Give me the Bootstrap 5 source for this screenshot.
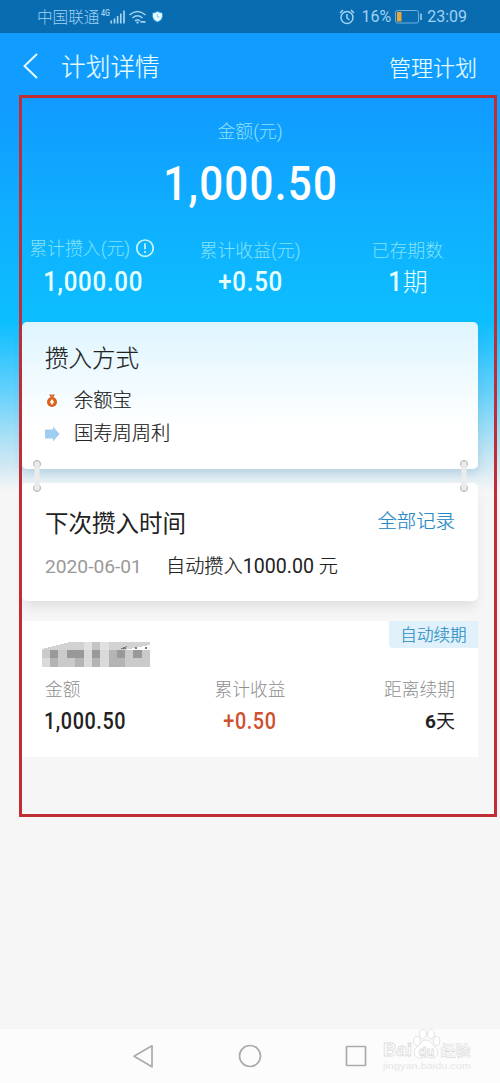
<!DOCTYPE html>
<html lang="zh-CN">
<head>
<meta charset="utf-8">
<meta name="viewport" content="width=device-width, initial-scale=1">
<title>计划详情</title>
<link href="https://cdn.jsdelivr.net/npm/bootstrap@5.3.0/dist/css/bootstrap.min.css" rel="stylesheet">
<style>
body{font-family:Roboto,"Noto Sans CJK SC",sans-serif;background:#f6f6f6;color:#222;line-height:1;height:1083px;overflow:hidden}
.screen{height:1083px;background:linear-gradient(#109dff 0,#109dff 115px,#0fafff 220px,#0cbfff 322px,#2fc5fe 350px,#69d2fb 395px,#a2def6 432px,#d3e9f3 467px,#e6f0f5 480px,#f6f6f6 492px)}
.statusbar{height:33px;background:#096bb0;color:#a0d3f3;font-size:16px;padding:1px 33px 0 37px}
.carrier{font-size:15.6px;font-weight:300;padding-top:3px}
.topbar{height:66px;color:#e8fcff;font-weight:300;padding:0 23px 0 22px;-webkit-text-stroke:.2px}
.topbar h1{font-size:24.7px;font-weight:300;margin:0 0 0 21px;padding-top:4px}
.t22{font-size:22px;padding-top:5px}
.total-label{height:64px;font-size:17.9px;color:#8fe2f8;font-weight:300;padding-top:2px}
.total{height:40px;font-size:49px;font-weight:500;color:#fff}
.din{display:inline-block;transform:scaleX(.86);letter-spacing:.03em;margin-right:-.03em}
.stats{height:119px;padding:33px 14px 0}
.stat-label{height:26px;font-size:17.9px;color:#84e2f8;font-weight:300;padding-top:3px}
.stat-label.lead-item{padding-top:0;margin-left:-2px}
.stat-value{height:34px;margin-top:3px;font-size:28px;font-weight:500;color:#e8ffff}
.sheet{margin:0 22px;position:relative}
.way{height:147px;border-radius:5px;background:linear-gradient(#def5ff,#fff 105px);padding:20px 23px 0;box-shadow:0 5px 10px rgba(60,120,160,.2)}
.ttl{font-size:23.5px;height:34px;margin:0;font-weight:300}
.way .ttl,.way-row{-webkit-text-stroke:.2px}
.way-row{height:33px;font-size:19.3px;font-weight:300}
.way-row svg{margin-right:14px}
.next{height:118px;margin-top:14px;background:#fff;border-radius:5px;padding:23px 23px 0;box-shadow:0 8px 12px -2px rgba(0,0,0,.09)}
.next .ttl{font-weight:400;padding-top:2px}
.next a{font-size:19.4px;color:#2989c6;text-decoration:none;font-weight:300;margin-top:-2px;-webkit-text-stroke:.2px}
.next-row{font-size:19.2px;height:34px;margin-top:10px;font-weight:300}
.next-row span{-webkit-text-stroke:.2px}
.next-row span span{font-size:19.6px;-webkit-text-stroke:0}
.next-row time{color:#999;width:121px}
.ring{position:absolute;bottom:-23.5px;z-index:2}
.term{height:136px;margin-top:20px;background:#fff;padding:0 23px}
.tag{position:absolute;right:0;top:0;width:89px;height:27px;font-size:16.6px;color:#2a90c4;background:#e1f1fc;border-radius:0 0 0 4px;font-weight:300;padding-top:3px;-webkit-text-stroke:.2px}
.mosaic{display:block;margin-left:-3px;padding-top:21px;height:55px}
.term-label{font-size:17.8px;color:#8e8e8e;height:26px;font-weight:300;padding-top:2px}
.term-value{font-size:23px;height:38px;font-weight:500}
.days{font-size:19px}
.gain{color:#ce5030}
.din.origin-l{transform-origin:left;margin-left:-1px}
.marker{position:absolute;left:19px;top:95px;width:478px;height:722px;border:3px solid #bf2e37;z-index:5}
.sysnav{height:54px;background:#fcfcfc}
.wm{position:absolute;left:382px;top:1026px}
</style>
</head>
<body>
<div class="screen d-flex flex-column position-relative">
  <div class="statusbar d-flex align-items-center">
    <span class="carrier">中国联通</span>
    <svg width="66" height="24" viewBox="99 5 66 24" fill="none" stroke="#a0d3f3">
      <text x="101" y="16" font-size="9" font-weight="500" textLength="9" lengthAdjust="spacingAndGlyphs" fill="#a0d3f3" stroke="none">4G</text>
      <path d="M111.200 23.500v-3M114.500 23.500v-5M117.600 23.500v-7.500M120.800 23.500v-10M124 23.500v-13" stroke-width="1.700"/>
      <path d="M129.500 15q8-7 16 0M132.500 18q5-4.500 10 0M135 21q2.500-2.500 5 0" stroke-width="1.600"/>
      <path d="M136.500 22.500h2M140.500 21.800h5" stroke-width="1.800"/>
      <path d="M157.500 11.500l5 1.800q.8 7-5 8.700q-5.800-1.700-5-8.700z" fill="#e9fbff" stroke="#27a1e6"/>
      <path d="M157.500 14v3h2" stroke="#77bde8" stroke-width=".8"/>
    </svg>
    <svg class="ms-auto" width="18" height="20" viewBox="0 0 18 20" fill="none" stroke="#a0d3f3" stroke-width="1.500"><circle cx="8" cy="10.500" r="6"/><path d="M8 7v4l2.500 2M1 6l3-3M15 6l-3-3"/></svg>
    <span class="ms-1">16%</span>
    <svg width="36" height="16" viewBox="0 0 36 16"><rect x="4.500" y="1.500" width="23" height="12.500" rx="2" fill="none" stroke="#74b2db"/><path d="M6 3h4.500v9.500H6z" fill="#eba63c"/><path d="M30 4.500v6.500" stroke="#a0d3f3" stroke-width="1.500"/></svg>
    <span>23:09</span>
  </div>
  <div class="topbar d-flex align-items-center">
    <svg width="18" height="28" viewBox="0 0 18 28" fill="none" stroke="#e8fcff" stroke-width="2"><path d="M15 2L2.500 14l12.500 12"/></svg>
    <h1>计划详情</h1><span class="ms-auto t22">管理计划</span>
  </div>
  <div class="total-label d-flex align-items-center justify-content-center">金额(元)</div>
  <div class="total d-flex align-items-center justify-content-center"><span class="din">1,000.50</span></div>
  <div class="stats row g-0 text-center">
    <div class="col"><div class="stat-label lead-item d-flex align-items-center justify-content-center">累计攒入(元)<svg class="ms-1" width="20" height="20" viewBox="0 0 20 20" fill="none" stroke="#c3f5fb" stroke-width="1.700"><circle cx="11" cy="9.200" r="8.200"/><path d="M11 4.200v6M11 11.900v2"/></svg></div><div class="stat-value d-flex align-items-center justify-content-center"><span class="din">1,000.00</span></div></div>
    <div class="col"><div class="stat-label d-flex align-items-center justify-content-center">累计收益(元)</div><div class="stat-value d-flex align-items-center justify-content-center"><span class="din">+0.50</span></div></div>
    <div class="col"><div class="stat-label d-flex align-items-center justify-content-center">已存期数</div><div class="stat-value d-flex align-items-center justify-content-center"><span class="din">1</span><span class="fw-light" style="font-size:25px">期</span></div></div>
  </div>
  <section class="sheet way">
    <h2 class="ttl d-flex align-items-center">攒入方式</h2>
    <div class="way-row d-flex align-items-center mt-2"><svg width="15" height="16" viewBox="0 0 15 16"><path d="M4 1.500h6l-1.500 2.500h-3z" fill="#d2703c"/><circle cx="7" cy="9" r="5" fill="#d9601f"/><path d="M7 6l2.200 3L7 12 4.800 9z" fill="#fff1e2"/></svg>余额宝</div>
    <div class="way-row d-flex align-items-center"><svg width="15" height="16" viewBox="0 0 15 16"><path d="M0 3.500h8V.5L14.500 8 8 15.500V12.500H0z" fill="#9fcdf2"/></svg>国寿周周利</div>
    <svg class="ring" style="left:10px" width="10" height="34" viewBox="0 0 10 34"><g fill="#ddd" stroke="#bcbcbc"><circle cx="5" cy="5" r="3.600"/><circle cx="5" cy="29" r="3.600"/></g><path d="M5 5.500v23" stroke="#ebebeb" stroke-width="5" stroke-linecap="round"/></svg>
    <svg class="ring" style="right:9.5px" width="10" height="34" viewBox="0 0 10 34"><g fill="#ddd" stroke="#bcbcbc"><circle cx="5" cy="5" r="3.600"/><circle cx="5" cy="29" r="3.600"/></g><path d="M5 5.500v23" stroke="#ebebeb" stroke-width="5" stroke-linecap="round"/></svg>
  </section>
  <section class="sheet next" style="z-index:auto">
    <div class="d-flex align-items-center justify-content-between"><h2 class="ttl d-flex align-items-center">下次攒入时间</h2><a href="#">全部记录</a></div>
    <div class="next-row d-flex align-items-center"><time class="fw-normal">2020-06-01</time><span>自动攒入<span class="fw-normal">1000.00</span> 元</span></div>
  </section>
  <section class="sheet term">
    <div class="tag d-flex align-items-center justify-content-center">自动续期</div>
    <svg class="mosaic" width="108" height="55" viewBox="0 0 108 34" preserveAspectRatio="xMinYMin" shape-rendering="crispEdges">
      <path d="M0 7L28 0h80v3L82 8H0z" fill="#d2d2d2"/><path d="M42 0h8v8h-8zM58 0h9v8h-9z" fill="#e1e1e1"/><path d="M50 0h8v8h-8z" fill="#c4c4c4"/>
      <path d="M0 8h108v17H0z" fill="#cacaca"/><path d="M0 16h8v9H0zM42 8h8v17h-8zM58 8h9v17h-9z" fill="#dadada"/>
      <path d="M8 8h8v8H8zM25 8h17v8H25zM50 8h8v8h-8zM75 8h8v8h-8zM91 8h9v8h-9z" fill="#999"/>
      <path d="M8 16h8v9H8zM33 16h9v9h-9zM50 16h8v9h-8zM67 8h8v17h-8zM75 16h8v9h-8z" fill="#b4b4b4"/>
      <path d="M78 7l7-3-1 3zM93 5l3 1-3 1zM103 5l3 1-3 1z" fill="#777"/>
    </svg>
    <div class="row g-0">
      <div class="col"><div class="term-label d-flex align-items-center">金额</div><div class="term-value d-flex align-items-center"><span class="din origin-l">1,000.50</span></div></div>
      <div class="col"><div class="term-label d-flex align-items-center justify-content-center">累计收益</div><div class="term-value gain d-flex align-items-center justify-content-center"><span class="din">+0.50</span></div></div>
      <div class="col"><div class="term-label d-flex align-items-center justify-content-end">距离续期</div><div class="term-value days d-flex align-items-center justify-content-end"><b>6</b><span class="fw-normal">天</span></div></div>
    </div>
  </section>
  <nav class="sysnav mt-auto">
    <svg width="500" height="54" viewBox="0 1029 500 54" fill="none" stroke="#ababab" stroke-width="1.700" stroke-linejoin="round"><path d="M134 1056.300l18-10.500v21z"/><circle cx="250" cy="1056" r="10.500"/><rect x="346.500" y="1046.500" width="19" height="19" rx=".5"/></svg>
  </nav>
  <svg class="wm" width="100" height="50" viewBox="382 1026 100 50" fill="#fff" stroke="#dcdcdc" stroke-width=".8" font-family="Liberation Sans,sans-serif">
    <text x="383" y="1056" font-size="19" font-weight="700" textLength="29">Bai</text>
    <path d="M426 1040c-5 0-6 5-9 7-5 4-3 11 3 11 3 0 4-1 6-1s3 1 6 1c6 0 8-7 3-11-3-2-4-7-9-7z"/>
    <ellipse cx="417" cy="1041" rx="3.300" ry="4.500"/><ellipse cx="423" cy="1034" rx="3.500" ry="4.800"/><ellipse cx="431" cy="1034" rx="3.500" ry="4.800"/><ellipse cx="436.500" cy="1041" rx="3.300" ry="4.500"/>
    <text x="418.500" y="1055.500" font-size="13" font-weight="700">du</text>
    <text x="440.500" y="1055.500" font-size="15" font-weight="700" font-family="Noto Sans CJK SC" stroke-width=".6">经验</text>
    <text x="383" y="1069" font-size="9.500" textLength="88" lengthAdjust="spacingAndGlyphs" fill="#e6e6e6" stroke="none">jingyan.baidu.com</text>
  </svg>
  <div class="marker"></div>
</div>
<script src="https://cdn.jsdelivr.net/npm/bootstrap@5.3.0/dist/js/bootstrap.bundle.min.js"></script>
</body>
</html>
